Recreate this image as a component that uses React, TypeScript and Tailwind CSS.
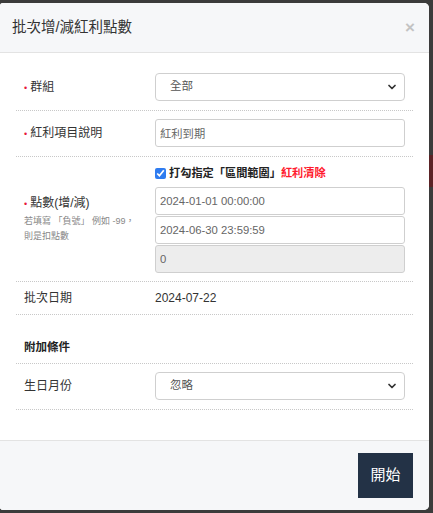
import { ChevronDown } from 'lucide-react';

const font = { fontFamily: '"Liberation Sans", "Noto Sans CJK TC", sans-serif' };

function Req() {
  return <span className="mr-[3px] text-[9px] text-[#e8173a]">•</span>;
}

function Select({ value }: { value: string }) {
  return (
    <div className="relative">
      <select
        defaultValue={value}
        className="h-[28px] w-full appearance-none rounded-[4px] border border-[#cfcfcf] bg-white pl-[14px] text-[11.5px] text-[#555] outline-none"
      >
        <option>{value}</option>
      </select>
      <ChevronDown className="pointer-events-none absolute right-[7px] top-[8px] h-[12px] w-[12px] text-[#333]" strokeWidth={3.5} />
    </div>
  );
}

function Field({ value, disabled }: { value: string; disabled?: boolean }) {
  return (
    <input
      readOnly
      value={value}
      className={`h-[28px] w-full rounded-[3px] border border-[#cfcfcf] px-[4px] text-[11.3px] text-[#666] outline-none ${
        disabled ? 'bg-[#ededed]' : 'bg-white'
      }`}
    />
  );
}

export default function App() {
  return (
    <div className="flex h-[513px] w-[433px] bg-[#3b3b3b] pt-[3px]" style={font}>
      {/* modal */}
      <div className="flex h-[507px] w-[429px] flex-col overflow-hidden rounded-r-[5px] rounded-l-[3px] bg-white">
        <div className="flex h-[50px] items-center justify-between border-b border-[#e3e3e3] bg-[#f6f7f9] pl-[12px] pr-[14px]">
          <span className="text-[14.5px] text-[#333]">批次增/減紅利點數</span>
          <span className="text-[17px] font-bold leading-none text-[#c3c3c3]">×</span>
        </div>

        <div className="flex-1 px-[16px] pt-[11px]">
          <div className="flex items-center border-b border-dotted border-[#c8c8c8] px-[8px] py-[9px]">
            <div className="w-[131px] text-[12px] text-[#333]"><Req />群組</div>
            <div className="flex-1"><Select value="全部" /></div>
          </div>

          <div className="flex items-center border-b border-dotted border-[#c8c8c8] px-[8px] pb-[9px] pt-[8px]">
            <div className="w-[131px] text-[12px] text-[#333]"><Req />紅利項目說明</div>
            <div className="flex-1"><Field value="紅利到期" /></div>
          </div>

          <div className="flex items-center border-b border-dotted border-[#c8c8c8] px-[8px] pb-[8px] pt-[8px]">
            <div className="w-[131px]">
              <div className="text-[12px] leading-[16px] text-[#333]"><Req />點數(增/減)</div>
              <div className="mt-[2px] text-[9px] leading-[15px] text-[#888]">
                若填寫 「負號」 例如 -99，
                <br />
                則是扣點數
              </div>
            </div>
            <div className="flex flex-1 flex-col gap-[1px]">
              <label className="mb-[5px] flex h-[16px] items-center gap-[3px] text-[11.2px] font-bold text-[#222]">
                <input type="checkbox" defaultChecked className="h-[11px] w-[11px] accent-[#2f7cf0]" />
                <span>
                  打勾指定「區間範圍」<span className="text-[#ff1a2e]">紅利清除</span>
                </span>
              </label>
              <Field value="2024-01-01 00:00:00" />
              <Field value="2024-06-30 23:59:59" />
              <Field value="0" disabled />
            </div>
          </div>

          <div className="flex items-center border-b border-dotted border-[#c8c8c8] px-[8px] py-[8px] text-[12px] leading-[16px] text-[#333]">
            <div className="w-[131px]">批次日期</div>
            <div className="flex-1">2024-07-22</div>
          </div>

          <div className="border-b border-dotted border-[#c8c8c8] px-[8px] pb-[8px] pt-[24px] text-[11.5px] font-bold leading-[16px] text-[#222]">
            附加條件
          </div>

          <div className="flex items-center border-b border-dotted border-[#c8c8c8] px-[8px] pb-[9px] pt-[8px]">
            <div className="w-[131px] text-[12px] text-[#333]">生日月份</div>
            <div className="flex-1"><Select value="忽略" /></div>
          </div>
        </div>

        <div className="flex h-[70px] justify-end border-t border-[#e3e3e3] bg-[#f6f7f9] pr-[16px] pt-[12px]">
          <button className="h-[45px] w-[55px] bg-[#233246] text-[15px] text-white">開始</button>
        </div>
      </div>

      {/* page behind the overlay */}
      <div className="flex-1 pt-[152px]">
        <div className="h-[32px] bg-[#5b2326]" />
      </div>
    </div>
  );
}
